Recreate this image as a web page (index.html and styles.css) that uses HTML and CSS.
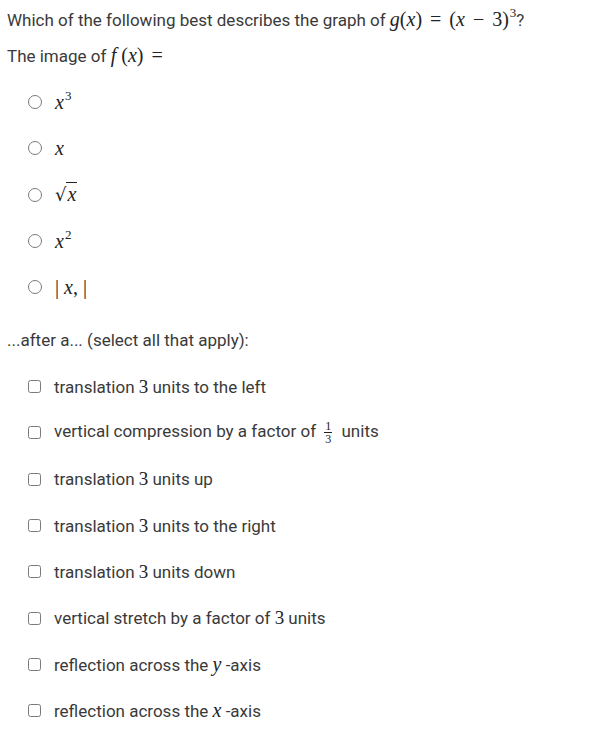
FILE: index.html
```html
<!DOCTYPE html>
<html>
<head>
<meta charset="utf-8">
<link rel="stylesheet" href="styles.css">
</head>
<body>
<div class="page">
  <p class="line q">Which of the following best describes the graph of <span class="m"><i>g</i>(<i>x</i>) <span class="op">=</span> (<i>x</i> <span class="op">−</span> 3)<sup>3</sup></span>?</p>
  <p class="line q2">The image of <span class="m"><i>f</i> (<i>x</i>) <span class="op">=</span></span></p>
  <ul class="opts radios">
    <li class="opt"><span class="radio"></span><span class="m"><i>x</i><sup>3</sup></span></li>
    <li class="opt"><span class="radio"></span><span class="m"><i>x</i></span></li>
    <li class="opt"><span class="radio"></span><span class="m"><span class="sqrt">√</span><span class="rad"><i>x</i></span></span></li>
    <li class="opt"><span class="radio"></span><span class="m"><i>x</i><sup>2</sup></span></li>
    <li class="opt"><span class="radio"></span><span class="m"><span class="bar">|</span> <i>x</i>, <span class="bar">|</span></span></li>
  </ul>
  <p class="line q3">...after a... (select all that apply):</p>
  <ul class="opts checks">
    <li class="opt"><span class="check"></span><span>translation <span class="n">3</span> units to the left</span></li>
    <li class="opt"><span class="check"></span><span>vertical compression by a factor of <span class="frac"><span class="num">1</span><span class="den">3</span></span> units</span></li>
    <li class="opt"><span class="check"></span><span>translation <span class="n">3</span> units up</span></li>
    <li class="opt"><span class="check"></span><span>translation <span class="n">3</span> units to the right</span></li>
    <li class="opt"><span class="check"></span><span>translation <span class="n">3</span> units down</span></li>
    <li class="opt"><span class="check"></span><span>vertical stretch by a factor of <span class="n">3</span> units</span></li>
    <li class="opt"><span class="check"></span><span>reflection across the <span class="m"><i>y</i></span> -axis</span></li>
    <li class="opt"><span class="check"></span><span>reflection across the <span class="m"><i>x</i></span> -axis</span></li>
  </ul>
</div>
</body>
</html>
```

FILE: styles.css
```css
html, body {
  margin: 0;
  padding: 0;
  background: #ffffff;
}
.page {
  padding: 0 7px;
  font-family: Roboto, "Liberation Sans", sans-serif;
  font-size: 17px;
  color: #3a3a3a;
}
.line {
  margin: 0;
  line-height: 24px;
}
.q { padding-top: 8px; }
.q2 { margin-top: 12px; }
.q3 { margin-top: 18px; }
.m {
  font-family: "Liberation Serif", "DejaVu Serif", serif;
  font-size: 20px;
  line-height: 20px;
  color: #222;
}
.m i { font-style: italic; }
.op { padding: 0 3px; }
.m sup {
  font-size: 13px;
  font-style: normal;
  vertical-align: 9px;
  line-height: 0;
  margin-left: 1px;
}
.n {
  font-family: "Liberation Serif", "DejaVu Serif", serif;
  font-size: 19px;
  line-height: 20px;
  color: #222;
}
.opts {
  list-style: none;
  margin: 0;
  padding: 0 0 0 21px;
}
.opts .opt {
  display: flex;
  align-items: center;
  gap: 13px;
  height: 46.3px;
}
.radios { margin-top: 11px; }
.checks { margin-top: 11px; }
.radio {
  width: 12px;
  height: 12px;
  border: 1px solid #7a7a7a;
  border-radius: 50%;
  flex: none;
}
.check {
  width: 11px;
  height: 11px;
  border: 1.5px solid #7a7a7a;
  border-radius: 2.5px;
  flex: none;
}
.sqrt {
  font-family: "DejaVu Serif", serif;
  font-size: 18px;
}
.rad {
  border-top: 1px solid #222;
  padding: 0 1px;
}
.bar { font-style: normal; }
.frac {
  display: inline-flex;
  flex-direction: column;
  align-items: center;
  vertical-align: middle;
  font-family: "Liberation Serif", serif;
  font-size: 12px;
  line-height: 12px;
  color: #222;
  margin: 0 5px 0 4px;
}
.frac .num {
  border-bottom: 1px solid #222;
  padding: 0 1px;
}
```
